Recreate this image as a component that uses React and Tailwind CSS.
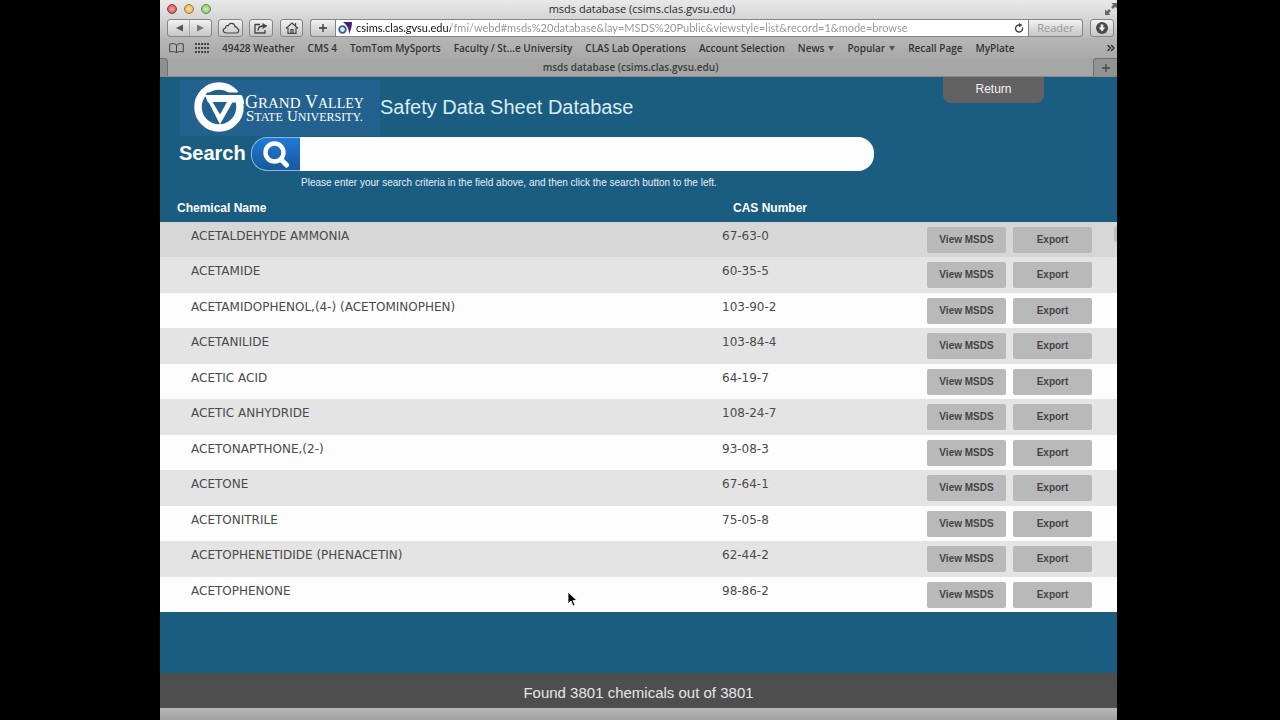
import { ChevronsRight } from 'lucide-react';

const chemicals = [
  { name: 'ACETALDEHYDE AMMONIA', cas: '67-63-0' },
  { name: 'ACETAMIDE', cas: '60-35-5' },
  { name: 'ACETAMIDOPHENOL,(4-) (ACETOMINOPHEN)', cas: '103-90-2' },
  { name: 'ACETANILIDE', cas: '103-84-4' },
  { name: 'ACETIC ACID', cas: '64-19-7' },
  { name: 'ACETIC ANHYDRIDE', cas: '108-24-7' },
  { name: 'ACETONAPTHONE,(2-)', cas: '93-08-3' },
  { name: 'ACETONE', cas: '67-64-1' },
  { name: 'ACETONITRILE', cas: '75-05-8' },
  { name: 'ACETOPHENETIDIDE (PHENACETIN)', cas: '62-44-2' },
  { name: 'ACETOPHENONE', cas: '98-86-2' },
];

const bookmarks = [
  { label: '49428 Weather' },
  { label: 'CMS 4' },
  { label: 'TomTom MySports' },
  { label: 'Faculty / St...e University' },
  { label: 'CLAS Lab Operations' },
  { label: 'Account Selection' },
  { label: 'News', menu: true },
  { label: 'Popular', menu: true },
  { label: 'Recall Page' },
  { label: 'MyPlate' },
];

const toolButton =
  'flex h-[18px] items-center justify-center rounded-[3px] border border-[#858585] bg-linear-to-b from-[#f2f2f2] to-[#c6c6c6] text-[#444]';

function TitleBar() {
  return (
    <div className="flex h-[18px] items-center bg-linear-to-b from-[#e9e9e9] to-[#d6d6d6] pl-[7px]">
      <div className="flex w-16 gap-[7px]">
        <button aria-label="Close" className="size-[10px] rounded-full border border-[#8d3b3b] bg-radial from-[#f2a0a0] to-[#cf4048]" />
        <button aria-label="Minimize" className="size-[10px] rounded-full border border-[#a07a3c] bg-radial from-[#fbe3a0] to-[#e2a748]" />
        <button aria-label="Zoom" className="size-[10px] rounded-full border border-[#5f8a4a] bg-radial from-[#cdf0b4] to-[#82bd62]" />
      </div>
      <h1 className="flex-1 text-center text-[11px] leading-4 text-[#2b2b2b]">msds database (csims.clas.gvsu.edu)</h1>
      <button aria-label="Full screen" className="flex w-16 justify-end">
        <svg className="size-3" viewBox="0 0 12 12" fill="#666">
          <path d="M6.500 0H12v5.500L10.200 3.700 8 6 6 4 8.300 1.800zM5.500 12H0V6.500L1.800 8.300 4 6l2 2-2.300 2.200z" />
        </svg>
      </button>
    </div>
  );
}

function Toolbar() {
  return (
    <div className="flex h-5 items-center bg-linear-to-b from-[#d6d6d6] to-[#b8b8b8] pr-[3px] pl-[7px]">
      <div className={`${toolButton} w-[45px]`}>
        <button aria-label="Back" className="flex flex-1 justify-center">
          <svg className="h-2 w-2" viewBox="0 0 8 8"><path d="M8 .500v7L1 4z" fill="#555" /></svg>
        </button>
        <span className="h-full w-px bg-[#aaa]" />
        <button aria-label="Forward" className="flex flex-1 justify-center">
          <svg className="h-2 w-2" viewBox="0 0 8 8"><path d="M0 .500v7L7 4z" fill="#777" /></svg>
        </button>
      </div>
      <button aria-label="iCloud tabs" className={`${toolButton} ml-[6px] w-[25px]`}>
        <svg className="h-3 w-[18px]" viewBox="0 0 18 12" fill="none" stroke="#444" strokeWidth="1.2">
          <path d="M4.500 11C.600 11 .200 6.600 3.600 6 3.400 3.700 5.300 3.200 6.200 3.800 7.300.300 12.500.300 13 4.800c1-.400 2.200.200 2.200 1.600 2.400.700 1.900 4.600-.900 4.600z" />
        </svg>
      </button>
      <button aria-label="Share" className={`${toolButton} ml-[6px] w-6`}>
        <svg className="h-3 w-[14px]" viewBox="0 0 14 12" fill="none" stroke="#444" strokeWidth="1.300">
          <path d="M6 2.500H1v8.500h10V8" />
          <path d="M4 8.500C4.200 5.300 6 4 9 4" />
          <path d="M8.500 1 13.500 4 8.500 7z" fill="#444" stroke="none" />
        </svg>
      </button>
      <button aria-label="Home" className={`${toolButton} ml-[7px] w-[23px]`}>
        <svg className="h-3 w-[14px]" viewBox="0 0 14 12" fill="none" stroke="#444" strokeWidth="1.200">
          <path d="M1 6.500 7 1l6 5.500M3 6v5.300h8V6M10.500 3.500V1" />
          <path d="M6 11V7.500h2V11" />
        </svg>
      </button>
      <button aria-label="Add bookmark" className={`${toolButton} ml-[7px] w-[25px] rounded-r-none border-r-0`}>
        <svg className="size-[10px]" viewBox="0 0 10 10"><path d="M5 1v8M1 5h8" stroke="#333" strokeWidth="1.300" /></svg>
      </button>
      <div className="flex h-[18px] flex-1 items-center border border-[#858585] bg-white pl-[2px]">
        <svg className="h-3 w-[14px] shrink-0" viewBox="0 0 14 12">
          <path d="M5 0h9c0 4-1 8-3 12 0-4-1-8-6-12z" fill="#4b1f78" />
          <circle cx="4.500" cy="7.500" r="3.300" fill="#dfe9f3" stroke="#2f5f93" strokeWidth="1.800" />
        </svg>
        <input
          type="text"
          aria-label="Address"
          readOnly
          value="csims.clas.gvsu.edu/fmi/webd#msds%20database&lay=MSDS%20Public&viewstyle=list&record=1&mode=browse"
          className="ml-1 h-4 min-w-0 flex-1 bg-linear-to-r from-[#111] from-[95px] to-[#929292] to-[95px] bg-clip-text font-['Lato',sans-serif] text-[11px] leading-4 text-transparent outline-none"
        />
        <button aria-label="Reload" className="mr-1">
          <svg className="size-[10px]" viewBox="0 0 10 10">
            <path d="M8.400 4.500A3.500 3.500 0 1 1 5.500 2" fill="none" stroke="#444" strokeWidth="1.400" />
            <path d="M5 0l3.500 2L5 4.300z" fill="#444" />
          </svg>
        </button>
      </div>
      <button className={`${toolButton} w-[54px] rounded-l-none border-l-0 text-[11px] leading-4 text-[#999]`}>Reader</button>
      <button aria-label="Downloads" className={`${toolButton} ml-[7px] w-6`}>
        <svg className="size-3" viewBox="0 0 12 12">
          <circle cx="6" cy="6" r="6" fill="#4a4a4a" />
          <path d="M4.700 2.500h2.600v3h2L6 9.500 2.700 5.500h2z" fill="#eee" />
        </svg>
      </button>
    </div>
  );
}

function BookmarksBar() {
  return (
    <nav className="flex h-5 items-center gap-[13px] bg-linear-to-b from-[#b6b6b6] to-[#a9a9a9] pl-[9px] text-[10px] leading-4 font-semibold whitespace-nowrap text-[#333]">
      <button aria-label="Show bookmarks">
        <svg className="h-[10px] w-[15px]" viewBox="0 0 15 10" fill="none" stroke="#444">
          <path d="M7.500 2C6 .400 3 .400.700 1v8c2.300-.600 5-.600 6.800.600C9.300 8.400 12 8.400 14.300 9V1C12 .400 9 .400 7.500 2zv7.500" />
        </svg>
      </button>
      <button aria-label="Top sites" className="-ml-0.5">
        <svg className="h-[10px] w-[14px]" viewBox="0 0 14 10" fill="#444">
          {[0, 4, 8].map((y) => [0, 3, 6, 9, 12].map((x) => <rect key={`${x}-${y}`} x={x} y={y} width="2" height="2" />))}
        </svg>
      </button>
      {bookmarks.map((item) => (
        <a key={item.label} href="#" className="flex items-center gap-1">
          {item.label}
          {item.menu && (
            <svg className="h-[5px] w-[6px]" viewBox="0 0 6 5"><path d="M0 0h6L3 5z" fill="#555" /></svg>
          )}
        </a>
      ))}
      <button aria-label="More bookmarks" className="ml-auto">
        <ChevronsRight className="size-3" strokeWidth={3} />
      </button>
    </nav>
  );
}

function TabBar() {
  return (
    <div className="flex h-[19px] border-b border-[#8a8a8a] bg-[#a6a6a6]">
      <span className="w-2 rounded-tr border-t border-r border-[#6f6f6f] bg-[#8f8f8f]" />
      <a href="#" className="flex-1 text-center text-[10px] leading-[18px] font-semibold text-[#3a3a3a]">
        msds database (csims.clas.gvsu.edu)
      </a>
      <button aria-label="New tab" className="flex w-6 items-center justify-center rounded-tl border-t border-l border-[#6f6f6f] bg-[#939393]">
        <svg className="size-2" viewBox="0 0 8 8"><path d="M4 0v8M0 4h8" stroke="#444" strokeWidth="1.300" /></svg>
      </button>
    </div>
  );
}

function Logo() {
  return (
    <svg className="h-[56px] w-[200px] bg-[#23618f]" viewBox="0 0 200 56" role="img" aria-label="Grand Valley State University">
      <circle cx="39" cy="27" r="21" fill="none" stroke="#fff" strokeWidth="7.500" />
      {/* opening of the G, then the bar and the V below it */}
      <path d="M27 12.500h30L62 10l5 3v3H25z" fill="#23618f" />
      <path d="M25 15h36.500c2 3 2.500 6 2.500 9H57l-1-1.500H28z" fill="#fff" />
      <path d="M25 15h31.500L40 44.500z" fill="#fff" />
      <path d="M32.500 22h14.500L40 34.500z" fill="#23618f" />
      <g fill="#fff" fontFamily="Liberation Serif, serif">
        <text x="65" y="28" fontSize="18">
          G<tspan fontSize="15">RAND</tspan>
        </text>
        <text x="125" y="28" fontSize="18">
          V<tspan fontSize="14">ALLEY</tspan>
        </text>
        <text x="66" y="41" fontSize="15">
          S<tspan fontSize="12">TATE</tspan>
        </text>
        <text x="107" y="41" fontSize="15">
          U<tspan fontSize="12">NIVERSITY.</tspan>
        </text>
      </g>
    </svg>
  );
}

function PageHeader() {
  return (
    <header className="h-[117px] font-['Liberation_Sans',sans-serif] text-white">
      <div className="flex items-start pr-[73px] pl-5">
        <div className="pt-[3px]">
          <Logo />
        </div>
        <h2 className="flex-1 pt-[18px] text-xl leading-6 text-[#dcebf5]">Safety Data Sheet Database</h2>
        <button className="h-[26px] w-[101px] rounded-b-lg bg-[#626262] pb-0.5 text-xs text-[#f2f2f2]">Return</button>
      </div>
      <form className="flex items-start pt-px pl-[19px]">
        <label htmlFor="search" className="w-[72px] pt-1 text-xl leading-6 font-bold">Search</label>
        <div>
          <div className="flex h-[34px]">
            <button
              type="button"
              aria-label="Search"
              className="flex w-[49px] items-center justify-center rounded-l-2xl border border-r-0 border-[#8fb9dc] bg-linear-to-b from-[#1f7ad8] to-[#17599c]"
            >
              <svg className="size-7" viewBox="0 0 28 28" fill="none" stroke="#fff">
                <circle cx="12.500" cy="12.500" r="9" strokeWidth="4.400" />
                <path d="M19.500 20l5 5" strokeWidth="5" strokeLinecap="round" />
              </svg>
            </button>
            <input id="search" type="text" className="w-[574px] rounded-r-2xl bg-[#fdfdfd] px-3 text-sm text-[#333] outline-none" />
          </div>
          <p className="pt-1 pl-[50px] text-[10px] leading-4 text-[#e6f0f6]">
            Please enter your search criteria in the field above, and then click the search button to the left.
          </p>
        </div>
      </form>
    </header>
  );
}

function ChemicalTable() {
  const rowButton =
    "h-[26px] w-[79px] rounded-[2px] bg-[#b9b9b9] font-['Liberation_Sans',sans-serif] text-[10px] font-bold text-[#444]";

  return (
    <div className="relative">
      <table className="w-full table-fixed border-collapse">
        <colgroup>
          <col />
          <col className="w-[205px]" />
          <col className="w-[190px]" />
        </colgroup>
        <thead className="font-['Liberation_Sans',sans-serif] text-xs text-white">
          <tr className="h-7 text-left">
            <th className="p-0 pl-[17px]">Chemical Name</th>
            <th className="p-0 pl-[11px]">CAS Number</th>
            <th className="p-0" aria-label="Actions" />
          </tr>
        </thead>
        <tbody className="font-['DejaVu_Sans',sans-serif] text-xs text-[#4a4a4a]">
          {chemicals.map((item) => (
            <tr
              key={item.name}
              className="align-top odd:h-[35px] odd:bg-[#fdfdfd] even:h-9 even:bg-[#e4e4e4] first:odd:bg-[#d7d7d7]"
            >
              <td className="p-0 pt-[6px] pl-[31px]">{item.name}</td>
              <td className="p-0 pt-[6px]">{item.cas}</td>
              <td className="p-0 pt-[5px]">
                <div className="flex gap-[7px]">
                  <button className={rowButton}>View MSDS</button>
                  <button className={rowButton}>Export</button>
                </div>
              </td>
            </tr>
          ))}
        </tbody>
      </table>
      {/* scroll thumb over the list edge */}
      <span className="absolute top-8 right-0 h-4 w-[3px] rounded-l bg-[#bdbdbd]" />
    </div>
  );
}

function Cursor() {
  return (
    <svg className="pointer-events-none absolute top-[591px] left-[567px] h-4 w-[11px]" viewBox="0 0 11 16">
      <path d="M1 1v12l3-3 2 5 2-1-2-4.500h4z" fill="#000" stroke="#fff" strokeWidth=".8" />
    </svg>
  );
}

function App() {
  return (
    <div className="relative min-h-screen bg-black pr-[163px] pl-40 font-['Open_Sans',sans-serif]">
      <div className="flex min-h-screen flex-col overflow-hidden">
        <TitleBar />
        <Toolbar />
        <BookmarksBar />
        <TabBar />
        <main className="flex-1 bg-[#1b5d80]">
          <PageHeader />
          <ChemicalTable />
        </main>
        <footer className="h-[35px] bg-[#4e4e4e] text-center font-['Liberation_Sans',sans-serif] text-[15px] leading-10 text-[#e6e6e6]">
          Found 3801 chemicals out of 3801
        </footer>
        <div className="h-3 bg-linear-to-b from-[#b9b9b9] to-[#a0a0a0]" />
      </div>
      <Cursor />
    </div>
  );
}

export default App;
